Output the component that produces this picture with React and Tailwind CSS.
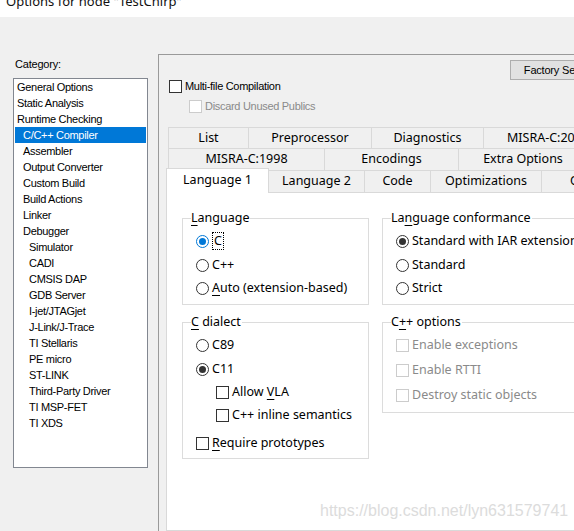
const categories = [
  ["General Options", 0],
  ["Static Analysis", 0],
  ["Runtime Checking", 0],
  ["C/C++ Compiler", 1, true],
  ["Assembler", 1],
  ["Output Converter", 1],
  ["Custom Build", 1],
  ["Build Actions", 1],
  ["Linker", 1],
  ["Debugger", 1],
  ["Simulator", 2],
  ["CADI", 2],
  ["CMSIS DAP", 2],
  ["GDB Server", 2],
  ["I-jet/JTAGjet", 2],
  ["J-Link/J-Trace", 2],
  ["TI Stellaris", 2],
  ["PE micro", 2],
  ["ST-LINK", 2],
  ["Third-Party Driver", 2],
  ["TI MSP-FET", 2],
  ["TI XDS", 2],
];

const indent = ["pl-[2px]", "pl-[8px]", "pl-[14px]"];

const tabRow1 = [
  ["List", "w-[81px]"],
  ["Preprocessor", "w-[124px]"],
  ["Diagnostics", "w-[113px]"],
  ["MISRA-C:2012", "w-[130px]"],
];

const tabRow2 = [
  ["MISRA-C:1998", "w-[157px]"],
  ["Encodings", "w-[135px]"],
  ["Extra Options", "w-[130px]"],
];

const tabRow3 = [
  ["Language 2", "w-[97px]"],
  ["Code", "w-[67px]"],
  ["Optimizations", "w-[112px]"],
  ["Output", "w-[100px]"],
];

const Radio = ({ checked, focus }) => (
  <span
    className={`w-[13px] h-[13px] rounded-full border bg-white flex items-center justify-center shrink-0 ${
      focus ? "border-[#0078d7]" : "border-[#333333]"
    }`}
  >
    {checked && (
      <span className={`w-[7px] h-[7px] rounded-full ${focus ? "bg-[#0078d7]" : "bg-[#333333]"}`} />
    )}
  </span>
);

const Check = ({ disabled }) => (
  <span
    className={`w-[13px] h-[13px] border bg-white shrink-0 ${
      disabled ? "border-[#cccccc]" : "border-[#333333]"
    }`}
  />
);

const U = ({ children }) => <span className="underline underline-offset-[3px]">{children}</span>;

const Group = ({ title, width, children }) => (
  <fieldset className={`border border-[#dcdcdc] ${width} shrink-0`}>
    <legend className="ml-[8px] pr-[1px] leading-[16px]">{title}</legend>
    {children}
  </fieldset>
);

const Row = ({ h = "h-[24px]", children, className = "" }) => (
  <div className={`flex items-center gap-[3px] ${h} ${className}`}>{children}</div>
);

export default function App() {
  return (
    <div className="w-[574px] h-[531px] overflow-hidden bg-[#f0f0f0] flex flex-col font-['Liberation_Sans',Arial,sans-serif] text-[11px] text-black">
      {/* title bar, cut off at the top */}
      <div className="h-[17px] bg-white overflow-hidden shrink-0">
        <div className="ml-[6px] -mt-[7px] leading-[16px] text-[13px] font-['Noto_Sans',sans-serif] text-[#111]">
          Options for node "TestChirp"
        </div>
      </div>

      <div className="flex flex-1 min-h-0">
        {/* Category column */}
        <div className="w-[158px] shrink-0 pt-[41px]">
          <div className="ml-[15px] leading-[13px] tracking-[-0.2px]">Category:</div>
          <div className="ml-[13px] mt-[7px] w-[135px] h-[390px] bg-white border border-[#828790] px-[1px] tracking-[-0.3px]">
            {categories.map(([name, level, selected]) => (
              <div
                key={name}
                className={`h-[16px] leading-[17px] ${indent[level]} ${
                  selected ? "bg-[#0078d7] text-white" : ""
                }`}
              >
                {name}
              </div>
            ))}
          </div>
        </div>

        {/* Options panel */}
        <div className="flex-1 mt-[37px] border-l border-t border-[#9a9a9a] overflow-hidden flex flex-col">
          <div className="mt-[5px] ml-[351px] w-[104px] h-[20px] shrink-0 bg-[#e1e1e1] border border-[#adadad] flex items-center justify-center tracking-[-0.2px]">
            Factory Settings
          </div>
          <div className="ml-[10px] h-[13px] flex items-center gap-[3px] tracking-[-0.3px]">
            <Check />
            <span>Multi-file Compilation</span>
          </div>
          <div className="ml-[30px] mt-[7px] h-[13px] flex items-center gap-[3px] text-[#8a8a8a] tracking-[-0.3px]">
            <Check disabled />
            <span>Discard Unused Publics</span>
          </div>

          {/* tabs */}
          <div className="mt-[14px] ml-[7px] flex flex-col flex-1 font-['Noto_Sans',sans-serif] text-[12.5px]">
            <div className="flex ml-[2px] shrink-0">
              {tabRow1.map(([t, w], i) => (
                <div
                  key={t}
                  className={`${w} h-[22px] shrink-0 border border-[#d9d9d9] flex items-center justify-center whitespace-nowrap ${
                    i ? "-ml-px" : ""
                  }`}
                >
                  {t}
                </div>
              ))}
            </div>
            <div className="flex ml-[2px] -mt-px shrink-0">
              {tabRow2.map(([t, w], i) => (
                <div
                  key={t}
                  className={`${w} h-[23px] shrink-0 border border-[#d9d9d9] flex items-center justify-center whitespace-nowrap ${
                    i ? "-ml-px" : ""
                  }`}
                >
                  {t}
                </div>
              ))}
            </div>
            <div className="flex items-end h-[25px] -mt-[3px] shrink-0">
              <div className="relative z-10 w-[103px] h-[25px] shrink-0 bg-white border-l border-t border-r border-[#d9d9d9] flex items-center justify-center pb-[1px]">
                Language 1
              </div>
              {tabRow3.map(([t, w]) => (
                <div
                  key={t}
                  className={`${w} h-[23px] -ml-px shrink-0 border border-[#d9d9d9] flex items-center justify-center whitespace-nowrap`}
                >
                  {t}
                </div>
              ))}
            </div>

            {/* tab page */}
            <div className="relative -mt-px flex-1 w-[440px] bg-white border border-[#d9d9d9] pl-[15px] pt-[17px]">
              <div className="flex items-start gap-[13px]">
                <Group
                  width="w-[187px]"
                  title={
                    <>
                      <U>L</U>anguage
                    </>
                  }
                >
                  <div className="pl-[13px] pt-[3px] pb-[4px]">
                    <Row>
                      <Radio checked focus />
                      <span className="border border-dotted border-black px-px leading-[16px]">C</span>
                    </Row>
                    <Row>
                      <Radio />
                      <span>C++</span>
                    </Row>
                    <Row h="h-[23px]">
                      <Radio />
                      <span>
                        <U>A</U>uto (extension-based)
                      </span>
                    </Row>
                  </div>
                </Group>
                <Group
                  width="w-[230px]"
                  title={
                    <>
                      La<U>n</U>guage conformance
                    </>
                  }
                >
                  <div className="pl-[13px] pt-[3px] pb-[4px] whitespace-nowrap">
                    <Row>
                      <Radio checked />
                      <span>Standard with IAR extensions</span>
                    </Row>
                    <Row>
                      <Radio />
                      <span>Standard</span>
                    </Row>
                    <Row h="h-[23px]">
                      <Radio />
                      <span>Strict</span>
                    </Row>
                  </div>
                </Group>
              </div>

              <div className="flex items-start gap-[13px] mt-[9px]">
                <Group
                  width="w-[187px]"
                  title={
                    <>
                      <U>C</U> dialect
                    </>
                  }
                >
                  <div className="pl-[13px] pt-[3px] pb-[3px]">
                    <Row>
                      <Radio />
                      <span>C89</span>
                    </Row>
                    <Row>
                      <Radio checked />
                      <span>C11</span>
                    </Row>
                    <Row h="h-[23px]" className="pl-[20px]">
                      <Check />
                      <span>
                        Allow <U>V</U>LA
                      </span>
                    </Row>
                    <Row h="h-[23px]" className="pl-[20px]">
                      <Check />
                      <span>C++ inline semantics</span>
                    </Row>
                    <Row className="mt-[4px]">
                      <Check />
                      <span>
                        <U>R</U>equire prototypes
                      </span>
                    </Row>
                  </div>
                </Group>
                <Group
                  width="w-[230px]"
                  title={
                    <>
                      C<U>+</U>+ options
                    </>
                  }
                >
                  <div className="pl-[13px] pt-[3px] pb-[4px] text-[#8a8a8a] whitespace-nowrap">
                    <Row h="h-[25px]">
                      <Check disabled />
                      <span>Enable exceptions</span>
                    </Row>
                    <Row h="h-[25px]">
                      <Check disabled />
                      <span>Enable RTTI</span>
                    </Row>
                    <Row h="h-[25px]">
                      <Check disabled />
                      <span>Destroy static objects</span>
                    </Row>
                  </div>
                </Group>
              </div>

              {/* watermark */}
              <div className="absolute left-[153px] top-[308px] font-['Liberation_Sans',Arial,sans-serif] text-[16px] leading-[20px] text-[#dcdcdc] whitespace-nowrap">
                https://blog.csdn.net/lyn631579741
              </div>
            </div>
          </div>
        </div>
      </div>
    </div>
  );
}
